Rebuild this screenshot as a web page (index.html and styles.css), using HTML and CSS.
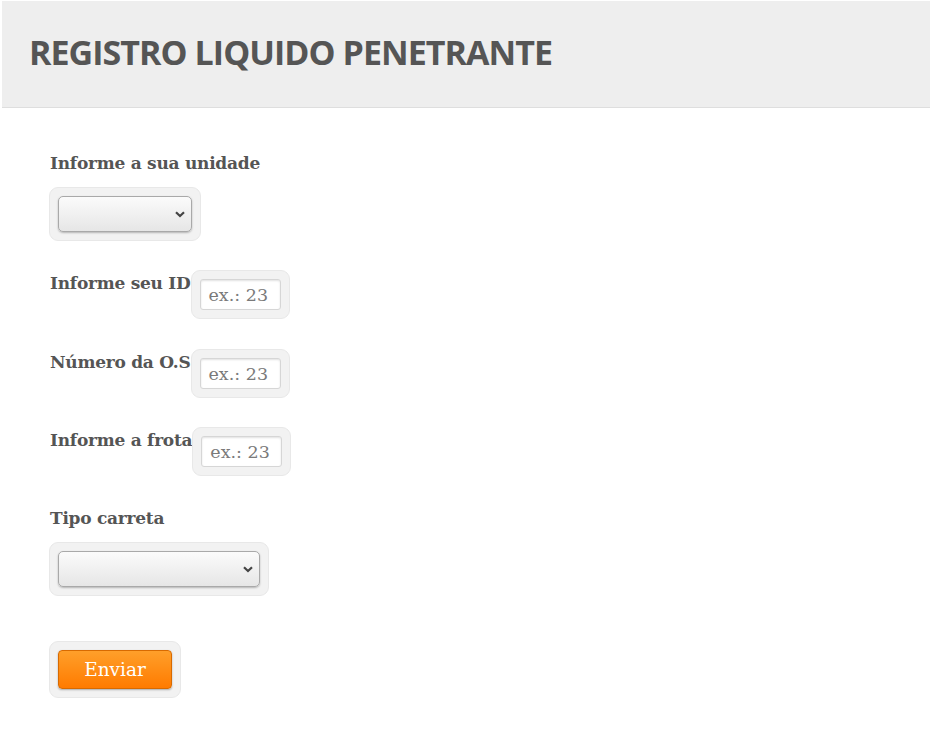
FILE: index.html
```html
<!DOCTYPE html>
<html lang="pt">
<head>
<meta charset="utf-8">
<title>Registro Liquido Penetrante</title>
<link rel="stylesheet" href="styles.css">
</head>
<body>
<header class="top">
  <h1 class="title">REGISTRO LIQUIDO PENETRANTE</h1>
</header>
<form class="form">
  <div class="field field-stack">
    <label class="label">Informe a sua unidade</label>
    <div class="wrap">
      <div class="select select-sm">
        <svg class="chev" viewBox="0 0 10 7" width="10" height="7"><path d="M1 1.2 L5 5 L9 1.2" fill="none" stroke="#444" stroke-width="2.2"/></svg>
      </div>
    </div>
  </div>
  <div class="field field-inline f-id">
    <label class="label">Informe seu ID</label>
    <div class="wrap"><div class="input">ex.: 23</div></div>
  </div>
  <div class="field field-inline f-os">
    <label class="label">Número da O.S</label>
    <div class="wrap"><div class="input">ex.: 23</div></div>
  </div>
  <div class="field field-inline f-frota">
    <label class="label">Informe a frota</label>
    <div class="wrap"><div class="input">ex.: 23</div></div>
  </div>
  <div class="field field-stack f-tipo">
    <label class="label">Tipo carreta</label>
    <div class="wrap">
      <div class="select select-lg">
        <svg class="chev" viewBox="0 0 10 7" width="10" height="7"><path d="M1 1.2 L5 5 L9 1.2" fill="none" stroke="#444" stroke-width="2.2"/></svg>
      </div>
    </div>
  </div>
  <div class="field f-btn">
    <div class="wrap"><button type="button" class="btn">Enviar</button></div>
  </div>
</form>
</body>
</html>
```
FILE: styles.css
```css
* { box-sizing: border-box; }
html, body { margin: 0; padding: 0; background: #fff; }
body { font-family: "DejaVu Serif", "Liberation Serif", serif; color: #555; }

.top {
  margin: 1px 0 0 2px;
  height: 107px;
  background: #eeeeee;
  border-bottom: 1px solid #dedede;
  display: flex;
  align-items: center;
  padding-left: 27px;
}
.title {
  margin: 0;
  font-family: "Open Sans", "Liberation Sans", sans-serif;
  font-weight: 700;
  font-size: 34px;
  letter-spacing: -0.95px;
  color: #555;
  white-space: nowrap;
  padding-bottom: 4px;
}

.form {
  padding: 44px 0 0 49px;
  display: flex;
  flex-direction: column;
  align-items: flex-start;
}
.label {
  font-weight: 700;
  font-size: 17px;
  color: #555;
  letter-spacing: -0.25px;
  line-height: 22px;
}
.field-stack { display: flex; flex-direction: column; align-items: flex-start; }
.field-stack .label { margin: 0 0 13px 1px; }
.field-inline { display: flex; align-items: flex-start; }
.field-inline .label { margin: 2px 0 0 1px; }

.f-id { margin-top: 29px; }
.f-os { margin-top: 30px; }
.f-frota { margin-top: 29px; }
.f-tipo { margin-top: 31px; }
.f-btn { margin-top: 45px; }

.wrap {
  padding: 8px;
  border-radius: 9px;
  background: #f2f2f2;
  border: 1px solid #e8e8e8;
}

.select {
  height: 36px;
  border: 1px solid #a9a9a9;
  border-radius: 5px;
  background: linear-gradient(#fbfbfb, #e6e6e6);
  box-shadow: 0 1px 2px rgba(0,0,0,0.25);
  display: flex;
  align-items: center;
  justify-content: flex-end;
  padding-right: 6px;
}
.select-sm { width: 134px; }
.select-lg { width: 202px; }
.chev { display: block; }

.input {
  width: 81px;
  height: 31px;
  background: #fff;
  border: 1px solid #d6d6d6;
  border-radius: 3px;
  box-shadow: inset 0 1px 2px rgba(0,0,0,0.12);
  font-size: 17.5px;
  color: #7a7a7a;
  padding: 4px 0 0 8px;
  line-height: 22px;
  white-space: nowrap;
  overflow: hidden;
}

.btn {
  display: block;
  width: 114px;
  height: 39px;
  border: 1px solid #d86a00;
  border-radius: 4px;
  background: linear-gradient(#ff9f2a, #ff7b00);
  box-shadow: 0 1px 2px rgba(0,0,0,0.3);
  color: #fff;
  font-family: "DejaVu Serif", "Liberation Serif", serif;
  font-size: 18.5px;
  padding: 0;
}
```
